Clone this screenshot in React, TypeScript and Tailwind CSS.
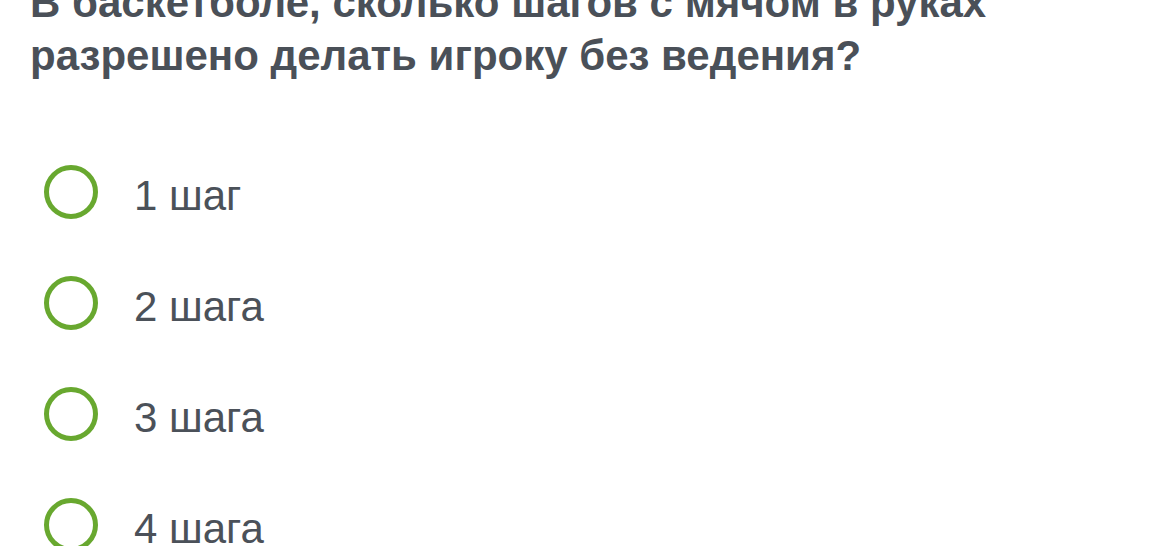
import React from "react";

const options = ["1 шаг", "2 шага", "3 шага", "4 шага"];

const QuizQuestion = () => {
  return (
    <div className="h-screen bg-white overflow-hidden font-['Liberation_Sans',Arial,sans-serif]">
      <h1 className="-mt-[24px] pl-[30px] pr-4 text-[42px] leading-[53px] font-bold text-[#4a5058]">
        В баскетболе, сколько шагов с мячом в руках
        <br />
        разрешено делать игроку без ведения?
      </h1>
      <ul className="mt-[58px] pl-[44px]">
        {options.map((label) => (
          <li key={label} className="flex h-[111px] items-center gap-[36px]">
            <span className="mb-[8px] h-[54px] w-[54px] shrink-0 rounded-full border-[5px] border-[#68a82f]" />
            <span className="text-[42px] leading-[48px] text-[#4b5159]">{label}</span>
          </li>
        ))}
      </ul>
    </div>
  );
};

export default function App() {
  return <QuizQuestion />;
}
